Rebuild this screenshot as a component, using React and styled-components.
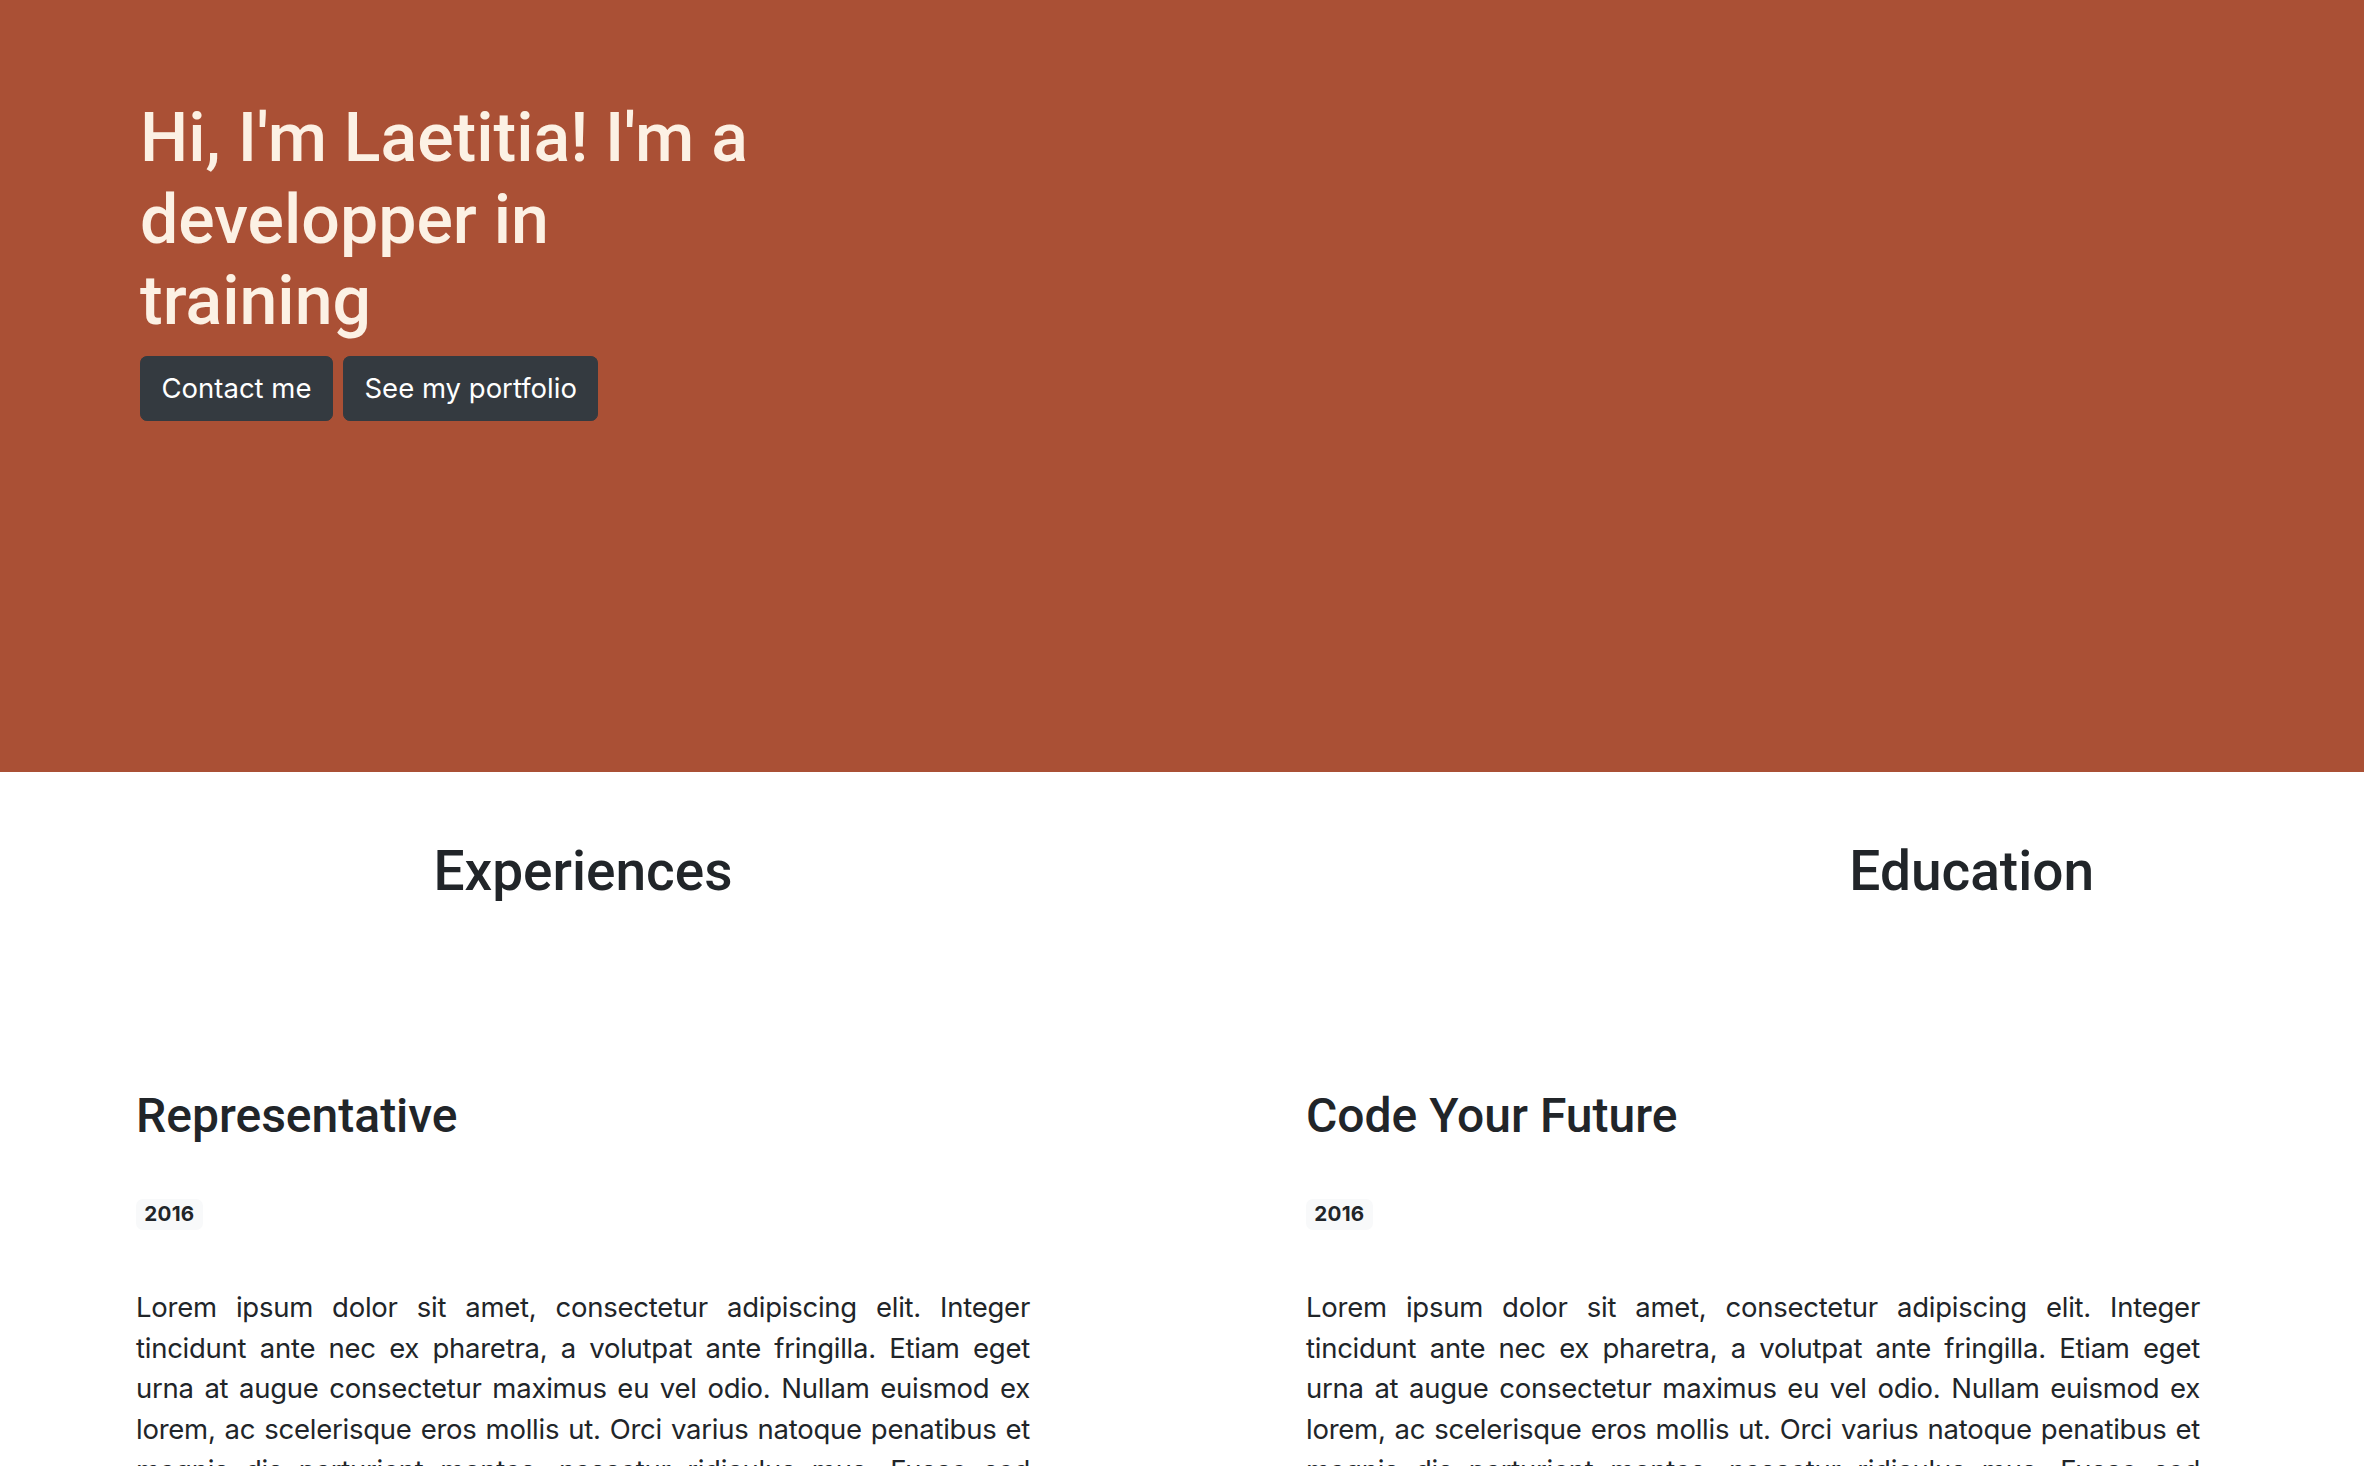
import React from "react";
import styled, { createGlobalStyle } from "styled-components";

const Global = createGlobalStyle`
  html, body { margin: 0; padding: 0; background: #ffffff; }
  body {
    font-family: Inter, Roboto, "Liberation Sans", sans-serif;
    font-size: 27.5px;
    line-height: 1.5;
    color: #212529;
  }
  * { box-sizing: border-box; }
`;

const Page = styled.div`
  width: 100%;
`;

const Hero = styled.header`
  background: #aa5035;
  height: 772px;
  padding: 98px 0 0 140px;
`;

const HeroTitle = styled.h1`
  margin: 0 0 13px;
  max-width: 630px;
  font-family: Roboto, Inter, sans-serif;
  font-size: 68px;
  line-height: 81.5px;
  font-weight: 500;
  color: #fcf1e4;
`;

const ButtonRow = styled.div`
  display: flex;
  gap: 10px;
`;

const DarkButton = styled.button`
  font-family: Inter, Roboto, sans-serif;
  font-size: 27.5px;
  line-height: 41px;
  font-weight: 400;
  color: #ffffff;
  background: #343a40;
  border: 1px solid #343a40;
  border-radius: 6.9px;
  padding: 11px 20.5px;
  cursor: pointer;
`;

const HeadingRow = styled.div`
  display: grid;
  grid-template-columns: 894px 1fr;
  column-gap: 276px;
  padding: 66px 136px 0;
`;

const SectionTitle = styled.h2`
  margin: 0;
  font-family: Roboto, Inter, sans-serif;
  font-size: 55px;
  line-height: 66px;
  font-weight: 500;
  text-align: ${(p) => (p.$align === "right" ? "right" : "center")};
  padding-right: ${(p) => (p.$align === "right" ? "134px" : "0")};
`;

const Columns = styled.div`
  display: grid;
  grid-template-columns: 894px 894px;
  column-gap: 276px;
  padding: 183px 0 0 136px;
`;

const Entry = styled.article`
  display: flex;
  flex-direction: column;
  align-items: flex-start;
`;

const EntryTitle = styled.h3`
  margin: 0;
  font-family: Roboto, Inter, sans-serif;
  font-size: 48px;
  line-height: 58px;
  font-weight: 500;
`;

const Badge = styled.span`
  display: inline-block;
  margin-top: 54px;
  font-size: 20.6px;
  line-height: 1;
  font-weight: 700;
  padding: 5.2px 8.2px;
  border-radius: 6.9px;
  background: #f8f9fa;
  color: #212529;
  letter-spacing: 0.3px;
`;

const Body = styled.p`
  margin: 57px 0 0;
  text-align: justify;
  font-size: 27.5px;
  line-height: 40.7px;
  letter-spacing: -0.25px;
  color: #212529;
`;

const LOREM =
  "Lorem ipsum dolor sit amet, consectetur adipiscing elit. Integer tincidunt ante nec ex pharetra, a volutpat ante fringilla. Etiam eget urna at augue consectetur maximus eu vel odio. Nullam euismod ex lorem, ac scelerisque eros mollis ut. Orci varius natoque penatibus et magnis dis parturient montes, nascetur ridiculus mus. Fusce sed ligula sit amet neque tristique sagittis.";

const experiences = [{ title: "Representative", year: "2016" }];
const education = [{ title: "Code Your Future", year: "2016" }];

export default function App() {
  return (
    <Page>
      <Global />
      <Hero>
        <HeroTitle>Hi, I'm Laetitia! I'm a developper in training</HeroTitle>
        <ButtonRow>
          <DarkButton>Contact me</DarkButton>
          <DarkButton>See my portfolio</DarkButton>
        </ButtonRow>
      </Hero>
      <HeadingRow>
        <SectionTitle>Experiences</SectionTitle>
        <SectionTitle $align="right">Education</SectionTitle>
      </HeadingRow>
      <Columns>
        {[experiences, education].map((list, i) => (
          <div key={i}>
            {list.map((e) => (
              <Entry key={e.title}>
                <EntryTitle>{e.title}</EntryTitle>
                <Badge>{e.year}</Badge>
                <Body>{LOREM}</Body>
              </Entry>
            ))}
          </div>
        ))}
      </Columns>
    </Page>
  );
}
